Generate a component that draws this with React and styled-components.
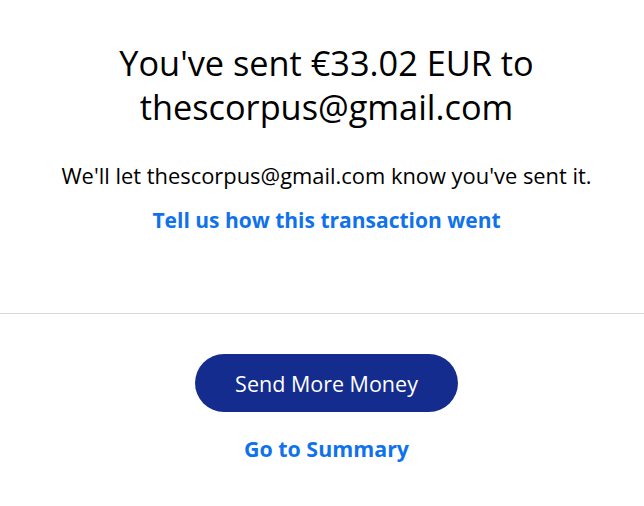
import styled, { createGlobalStyle } from "styled-components";

const Global = createGlobalStyle`
  body {
    margin: 0;
    background: #fff;
    font-family: "Open Sans", "Noto Sans", sans-serif;
    color: #000;
  }
`;

const Page = styled.div`
  width: 644px;
  display: flex;
  flex-direction: column;
`;

const Top = styled.div`
  display: flex;
  flex-direction: column;
  align-items: center;
  padding: 41px 20px 79px 29px;
  border-bottom: 1px solid #dbd8d0;
  text-align: center;
`;

const Heading = styled.h1`
  margin: 0;
  font-size: 34.3px;
  font-weight: 400;
  line-height: 44px;
  width: 470px;
`;

const Note = styled.p`
  margin: 33px 0 0;
  font-size: 21.9px;
  line-height: 28px;
`;

const Link = styled.a`
  display: block;
  color: #1072eb;
  font-weight: 700;
  font-size: ${(p) => p.$size || 21}px;
  line-height: 28px;
  text-decoration: none;
  margin-top: ${(p) => p.$top || 0}px;
  cursor: pointer;
`;

const Bottom = styled.div`
  display: flex;
  flex-direction: column;
  align-items: center;
  padding: 40px 0 0 9px;
`;

const Primary = styled.button`
  width: 263px;
  height: 58px;
  border: none;
  border-radius: 29px;
  background: #142c8e;
  color: #fff;
  font-family: inherit;
  font-size: 21.5px;
  cursor: pointer;
`;

export default function App() {
  return (
    <Page>
      <Global />
      <Top>
        <Heading>You've sent €33.02 EUR to thescorpus@gmail.com</Heading>
        <Note>We'll let thescorpus@gmail.com know you've sent it.</Note>
        <Link $top={16}>Tell us how this transaction went</Link>
      </Top>
      <Bottom>
        <Primary>Send More Money</Primary>
        <Link $top={23} $size={21.4}>Go to Summary</Link>
      </Bottom>
    </Page>
  );
}
